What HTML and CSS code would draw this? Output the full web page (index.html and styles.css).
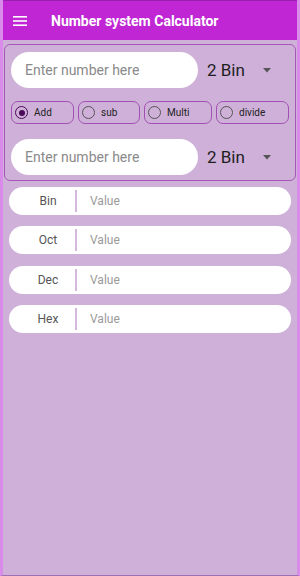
FILE: index.html
```html
<!DOCTYPE html>
<html lang="en">
<head>
    <meta charset="UTF-8">
    <meta name="viewport" content="width=device-width, initial-scale=1.0">
    <title>Number system Calculator</title>
    <link rel="stylesheet" href="styles.css">
</head>
<body>
    <div class="screen">
        <header class="app-bar">
            <svg class="menu-icon" width="14" height="10" viewBox="0 0 14 10">
                <rect x="0" y="0" width="14" height="1.6" fill="#fff"/>
                <rect x="0" y="4.2" width="14" height="1.6" fill="#fff"/>
                <rect x="0" y="8.4" width="14" height="1.6" fill="#fff"/>
            </svg>
            <h1>Number system Calculator</h1>
        </header>

        <div class="content">
            <!-- Input section -->
            <div class="input-card">
                <div class="input-row">
                    <div class="pill-input">Enter number here</div>
                    <div class="base-select">
                        <span>2 Bin</span>
                        <svg width="8" height="5" viewBox="0 0 8 5"><path d="M0 0 L8 0 L4 4.5 Z" fill="#555"/></svg>
                    </div>
                </div>

                <div class="op-row">
                    <label class="op op-add"><span class="radio checked"></span>Add</label>
                    <label class="op op-sub"><span class="radio"></span>sub</label>
                    <label class="op op-multi"><span class="radio"></span>Multi</label>
                    <label class="op op-div"><span class="radio"></span>divide</label>
                </div>

                <div class="input-row">
                    <div class="pill-input">Enter number here</div>
                    <div class="base-select">
                        <span>2 Bin</span>
                        <svg width="8" height="5" viewBox="0 0 8 5"><path d="M0 0 L8 0 L4 4.5 Z" fill="#555"/></svg>
                    </div>
                </div>
            </div>

            <!-- Results -->
            <div class="results">
                <div class="result-row"><span class="result-label">Bin</span><span class="result-value">Value</span></div>
                <div class="result-row"><span class="result-label">Oct</span><span class="result-value">Value</span></div>
                <div class="result-row"><span class="result-label">Dec</span><span class="result-value">Value</span></div>
                <div class="result-row"><span class="result-label">Hex</span><span class="result-value">Value</span></div>
            </div>
        </div>
    </div>
</body>
</html>
```

FILE: styles.css
```css
body {
    margin: 0;
    padding: 0;
    font-family: Roboto, "Liberation Sans", sans-serif;
    background-color: #cfb0d8;
}
.screen {
    width: 300px;
    height: 576px;
    box-sizing: border-box;
    background-color: #cfb0d8;
    border-left: 3px solid #d98bea;
    border-right: 3px solid #d98bea;
    border-bottom: 1px solid #9d70b6;
    overflow: hidden;
}
.app-bar {
    height: 40px;
    margin: 0 -3px;
    background-color: #c026d4;
    border-top: 1px solid #9a1fae;
    box-sizing: border-box;
    display: flex;
    align-items: center;
    padding-left: 13px;
}
.menu-icon {
    margin-right: 24px;
}
.app-bar h1 {
    margin: 0;
    font-size: 14px;
    font-weight: 700;
    color: #fff;
}
.content {
    padding: 4px 1px 0 1px;
}
.input-card {
    border: 1px solid #a658b8;
    border-radius: 6px;
    padding: 7px 0 6px 6px;
    height: 137px;
    box-sizing: border-box;
}
.input-row {
    display: flex;
    align-items: center;
}
.pill-input {
    width: 187px;
    height: 36px;
    border-radius: 18px;
    background-color: #fff;
    color: #8a8a8a;
    font-size: 14px;
    line-height: 36px;
    padding-left: 14px;
    box-sizing: border-box;
}
.base-select {
    display: flex;
    align-items: center;
    margin-left: 9px;
}
.base-select span {
    font-size: 17px;
    color: #1e1e1e;
}
.base-select svg {
    margin-left: 18px;
}
.op-row {
    display: flex;
    gap: 4px;
    margin: 13px 0 15px 0;
}
.op {
    height: 23px;
    box-sizing: border-box;
    border: 1px solid #a151b3;
    border-radius: 7px;
    display: flex;
    align-items: center;
    padding-left: 3px;
    font-size: 10px;
    color: #222;
}
.op-add { width: 63px; }
.op-sub { width: 62px; }
.op-multi { width: 68px; }
.op-div { width: 73px; }
.radio {
    width: 11px;
    height: 11px;
    border: 1.5px solid #555;
    border-radius: 50%;
    margin-right: 6px;
    position: relative;
    box-sizing: content-box;
}
.radio.checked {
    border-color: #4a0a58;
}
.radio.checked::after {
    content: "";
    position: absolute;
    left: 2.5px;
    top: 2.5px;
    width: 6px;
    height: 6px;
    border-radius: 50%;
    background-color: #4a0a58;
}
.results {
    padding: 6px 5px 0 5px;
    display: flex;
    flex-direction: column;
    gap: 11.4px;
}
.result-row {
    height: 28px;
    background-color: #fff;
    border-radius: 14px;
    display: flex;
    align-items: center;
}
.result-label {
    width: 68px;
    padding-left: 12px;
    text-align: center;
    font-size: 12px;
    color: #555;
    border-right: 2px solid #d3b8dc;
    height: 22px;
    line-height: 22px;
    box-sizing: border-box;
}
.result-value {
    margin-left: 13px;
    font-size: 12px;
    color: #9a9a9a;
}
```
